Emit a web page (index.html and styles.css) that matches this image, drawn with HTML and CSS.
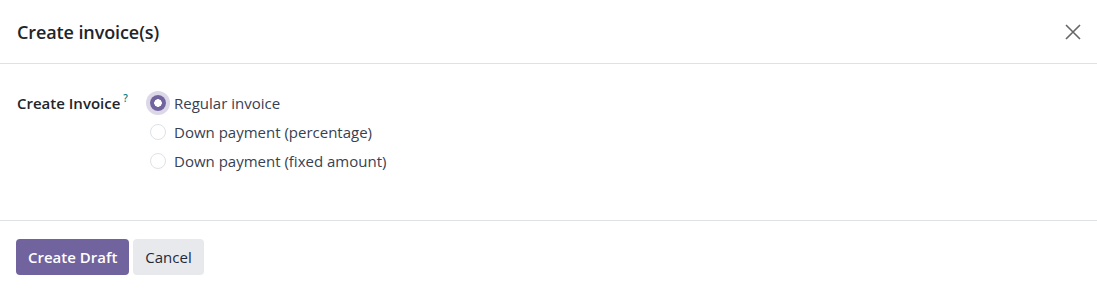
FILE: index.html
```html
<!DOCTYPE html>
<html lang="en">

<head>
  <meta charset="UTF-8">
  <meta name="viewport" content="width=device-width, initial-scale=1.0">
  <title>Create invoice(s)</title>
  <link rel="stylesheet" href="styles.css">
</head>

<body>
  <div class="modal">
    <div class="modal-header">
      <h4 class="modal-title">Create invoice(s)</h4>
      <button class="btn-close" aria-label="Close">
        <svg width="16" height="16" viewBox="0 0 16 16">
          <path d="M1 1 L15 15 M15 1 L1 15" stroke="#666" stroke-width="1.6" fill="none" />
        </svg>
      </button>
    </div>
    <div class="modal-body">
      <div class="field">
        <label class="field-label">Create Invoice<sup class="tip">?</sup></label>
        <div class="radios">
          <label class="radio"><span class="dot checked"></span>Regular invoice</label>
          <label class="radio"><span class="dot"></span>Down payment (percentage)</label>
          <label class="radio"><span class="dot"></span>Down payment (fixed amount)</label>
        </div>
      </div>
    </div>
    <div class="modal-footer">
      <button class="btn btn-primary">Create Draft</button>
      <button class="btn btn-secondary">Cancel</button>
    </div>
  </div>
</body>

</html>
```

FILE: styles.css
```css
* {
  margin: 0;
  padding: 0;
  box-sizing: border-box;
}

body {
  background: #fff;
  font-family: "Open Sans", "Noto Sans", sans-serif;
  font-size: 15px;
  color: #374151;
}

.modal-header {
  height: 64px;
  display: flex;
  align-items: center;
  justify-content: space-between;
  padding: 0 16px 0 17px;
  border-bottom: 1px solid #dee2e6;
}

.modal-title {
  font-size: 18px;
  font-weight: 600;
  letter-spacing: -0.1px;
  color: #212529;
}

.btn-close {
  border: 0;
  background: none;
  display: flex;
  cursor: pointer;
}

.modal-body {
  height: 157px;
  padding: 28px 17px;
  border-bottom: 1px solid #dee2e6;
}

.field {
  display: flex;
}

.field-label {
  width: 133px;
  font-weight: 600;
  color: #212529;
  line-height: 22px;
}

.tip {
  color: #017e84;
  font-size: 10px;
  line-height: 0;
  margin-left: 3px;
  vertical-align: 7px;
}

.radios {
  display: flex;
  flex-direction: column;
  gap: 7px;
}

.radio {
  display: flex;
  align-items: center;
  gap: 8px;
  line-height: 22px;
  color: #374151;
}

.dot {
  width: 16px;
  height: 16px;
  border-radius: 50%;
  border: 1px solid #dee2e6;
  background: #fff;
}

.dot.checked {
  border: 0;
  background: radial-gradient(circle, #fff 0 3.5px, #71639e 4px);
  box-shadow: 0 0 0 4px #dcd8e8;
}

.modal-footer {
  display: flex;
  gap: 4px;
  padding: 18px 16px;
}

.btn {
  height: 36px;
  border: 0;
  border-radius: 4px;
  padding: 0 12px;
  font-family: inherit;
  font-size: 15px;
  font-weight: 600;
}

.btn-primary {
  background: #71639e;
  color: #fff;
}

.btn-secondary {
  background: #e7e9ed;
  color: #1f2937;
  font-weight: 500;
}
```
